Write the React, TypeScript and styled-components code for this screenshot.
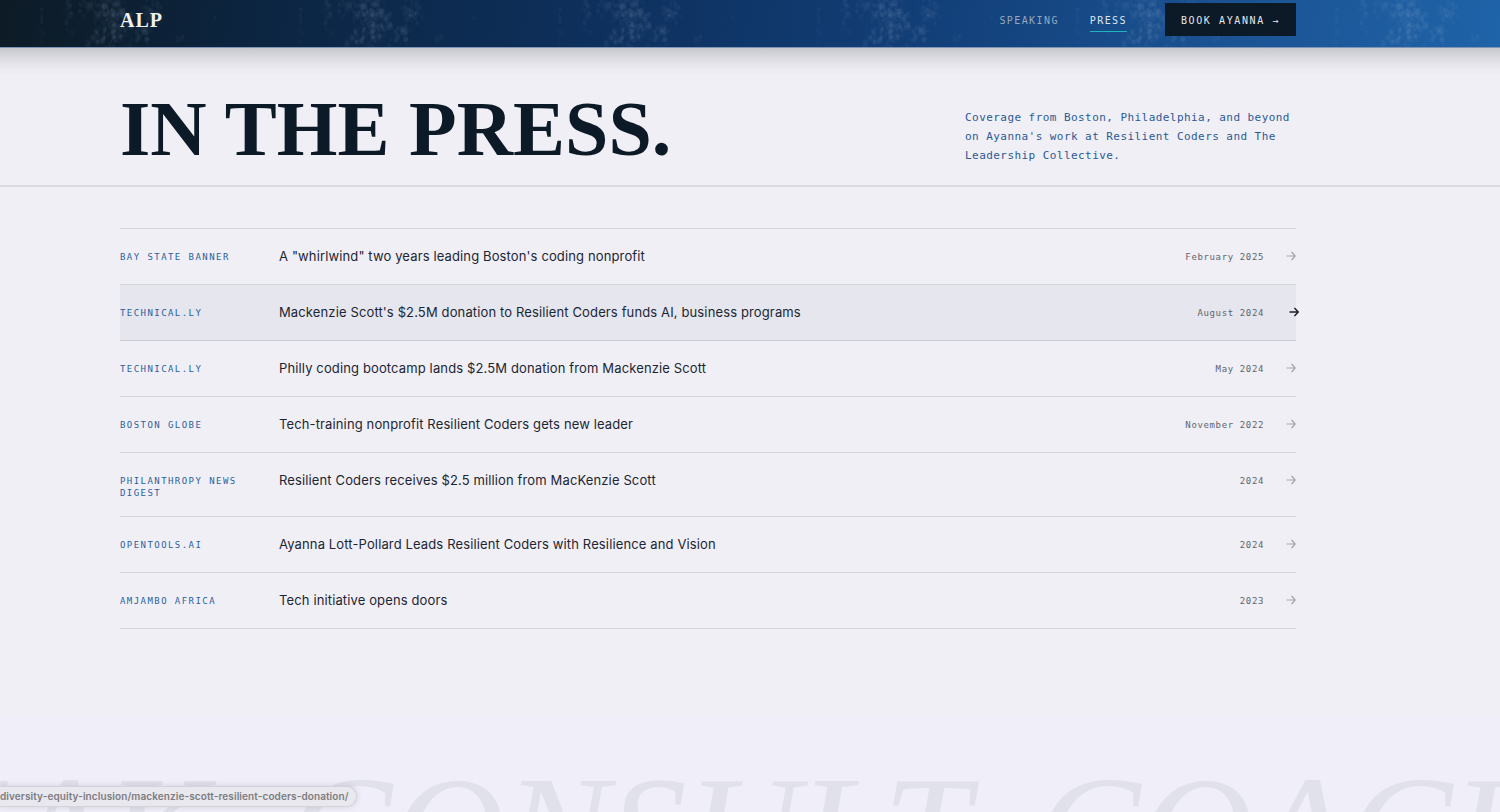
import React from "react";
import styled, { createGlobalStyle, css } from "styled-components";

const mono = `"DejaVu Sans Mono", monospace`;
const serif = `"Liberation Serif", serif`;
const sans = `Inter, sans-serif`;

const GlobalStyle = createGlobalStyle`
  *, *::before, *::after { box-sizing: border-box; }
  html, body { margin: 0; height: 100%; }
  #root { height: 100%; }
  body { background: #f0eff5; color: #1c2633; font-family: ${sans}; overflow: hidden; }
  a { color: inherit; text-decoration: none; }
`;

const Page = styled.div`
  display: flex;
  flex-direction: column;
  height: 100%;
  overflow: hidden;
  position: relative;
`;

const Header = styled.header`
  position: relative;
  z-index: 1;
  flex: none;
  border-bottom: 1px solid #7f95b8;
  background: linear-gradient(100deg, #0d1b26 0%, #0c2644 20%, #0e315f 42%, #123f78 62%, #1a5191 80%, #1f63a8 100%);

  &::after {
    content: "";
    position: absolute;
    top: 100%;
    left: 0;
    right: 0;
    height: 28px;
    margin-top: 1px;
    background: linear-gradient(rgba(20, 24, 40, 0.18), rgba(20, 24, 40, 0.11) 30%, rgba(20, 24, 40, 0.03) 65%, rgba(20, 24, 40, 0));
    pointer-events: none;
  }
`;

const Grain = styled.svg`
  position: absolute;
  inset: 0;
  width: 100%;
  height: 100%;
`;

const Container = styled.div`
  margin: 0 204px 0 120px;
`;

const HeaderInner = styled(Container)`
  position: relative;
  display: flex;
  align-items: center;
  justify-content: space-between;
  height: 47px;
  padding-bottom: 8px;
`;

const Logo = styled.a`
  font: bold 20px/24px ${serif};
  letter-spacing: 1px;
  color: #f1f0ec;
`;

const Nav = styled.nav`
  display: flex;
  align-items: center;
  gap: 31px;
  font: 10px/16px ${mono};
`;

const NavLink = styled.a<{ $active?: boolean }>`
  letter-spacing: 0.14em;
  margin-top: 5px;
  padding-bottom: 2px;
  border-bottom: 1px solid ${(p) => (p.$active ? "#1fb5bd" : "transparent")};
  color: ${(p) => (p.$active ? "#dfe5ec" : "#93a9c0")};
`;

const BookButton = styled.button`
  height: 33px;
  margin-left: 7px;
  padding: 2px 16px 0;
  border: 0;
  background: #0b1a26;
  color: #e6e7ec;
  font: 10px/16px ${mono};
  letter-spacing: 0.16em;
  white-space: nowrap;
`;

const Hero = styled.section`
  flex: none;
  border-bottom: 2px solid #dadae1;
`;

const HeroInner = styled(Container)`
  display: flex;
  align-items: flex-end;
  justify-content: space-between;
  padding: 45px 0 20px;
`;

const Title = styled.h1`
  margin: 0;
  font: bold 78px/72px ${serif};
  color: #0b1a26;
`;

const Intro = styled.p`
  width: 331px;
  margin: 0;
  font: 11px/19px ${mono};
  letter-spacing: 0.04em;
  color: #2b5a95;
`;

const List = styled.ul`
  flex: none;
  list-style: none;
  margin: 41px 204px 86px 120px;
  padding: 0;
  border-top: 1px solid #d5d5dc;
`;

const Row = styled.a<{ $hover?: boolean }>`
  display: grid;
  grid-template-columns: 127px 1fr auto 10px;
  column-gap: 32px;
  align-items: start;
  padding: 16px 0 17px;
  border-bottom: 1px solid #d5d5dc;
  ${(p) => p.$hover && css`background: #e5e6ee; border-color: #cbccd4;`}
`;

const Source = styled.span`
  padding-top: 6px;
  font: 9px/12px ${mono};
  letter-spacing: 0.16em;
  color: #2b5f9d;
`;

const Headline = styled.span`
  font-size: 13px;
  line-height: 22px;
  letter-spacing: 0.01em;
`;

const PressDate = styled.time`
  margin-right: -10px;
  padding-top: 6px;
  font: 9px/12px ${mono};
  letter-spacing: 0.07em;
  color: #60646c;
`;

const Arrow = styled.svg<{ $hover?: boolean }>`
  width: 10px;
  height: 22px;
  fill: none;
  stroke: ${(p) => (p.$hover ? "#1c2630" : "#a2a5ac")};
  stroke-width: ${(p) => (p.$hover ? 1.5 : 1.2)};
  transform: ${(p) => (p.$hover ? "translateX(3px)" : "none")};
`;

const Ticker = styled.section`
  flex: 1 0 0;
  min-height: 0;
  padding-top: 52px;
  overflow: hidden;
  background: #f0eef9;
`;

const TickerText = styled.div`
  margin-left: -258px;
  font: italic 156px/130px ${serif};
  color: #e0e1ea;
  white-space: nowrap;
`;

const Status = styled.div`
  position: absolute;
  left: 0;
  bottom: 5px;
  padding: 0 7px 0 0;
  border: 1px solid #d4d3da;
  border-left: 0;
  border-radius: 0 10px 10px 0;
  background: #e9e8ee;
  box-shadow: 0 0 6px rgba(20, 20, 40, 0.12);
  color: #7c7c81;
  font: 600 10px/19px Inter, sans-serif;
  letter-spacing: 0.01em;
  white-space: nowrap;
`;

type Article = { source: string; title: string; date: string; hover?: boolean };

const articles: Article[] = [
  { source: "BAY STATE BANNER", title: "A \"whirlwind\" two years leading Boston's coding nonprofit", date: "February 2025" },
  { source: "TECHNICAL.LY", title: "Mackenzie Scott's $2.5M donation to Resilient Coders funds AI, business programs", date: "August 2024", hover: true },
  { source: "TECHNICAL.LY", title: "Philly coding bootcamp lands $2.5M donation from Mackenzie Scott", date: "May 2024" },
  { source: "BOSTON GLOBE", title: "Tech-training nonprofit Resilient Coders gets new leader", date: "November 2022" },
  { source: "PHILANTHROPY NEWS DIGEST", title: "Resilient Coders receives $2.5 million from MacKenzie Scott", date: "2024" },
  { source: "OPENTOOLS.AI", title: "Ayanna Lott-Pollard Leads Resilient Coders with Resilience and Vision", date: "2024" },
  { source: "AMJAMBO AFRICA", title: "Tech initiative opens doors", date: "2023" },
];

// Speckle clusters: centre, spread and number of specks, tiled every 259px.
const clusters = [
  [68, 8, 4, 22, 24],
  [104, 6, 22, 10, 110],
  [114, 24, 16, 14, 150],
  [102, 42, 22, 8, 50],
  [154, 12, 9, 9, 44],
  [142, 32, 8, 10, 30],
  [42, 30, 4, 16, 8],
  [216, 12, 22, 20, 6],
  [185, 38, 8, 3, 4],
];

const specks = (() => {
  let seed = 7;
  const rnd = () => (seed = (seed * 16807) % 2147483647) / 2147483647;
  const spread = () => rnd() + rnd() - 1;
  return clusters.flatMap(([cx, cy, sx, sy, n]) =>
    Array.from({ length: n }, () => ({
      x: cx + spread() * sx * 1.4,
      y: cy + spread() * sy * 1.4,
      r: 0.6 + rnd() * 1.8,
      o: 0.015 + rnd() * 0.033,
    }))
  );
})();

export default function App() {
  return (
    <Page>
      <GlobalStyle />
      <Header>
        <Grain aria-hidden="true">
          <defs>
            <pattern id="specks" width="259" height="64" patternUnits="userSpaceOnUse">
              {specks.map((s, i) => (
                <ellipse key={i} cx={s.x} cy={s.y} rx={s.r} ry={s.r * 1.3} fill="#b9cbe0" opacity={s.o} />
              ))}
            </pattern>
          </defs>
          <rect width="100%" height="100%" fill="url(#specks)" />
        </Grain>
        <HeaderInner>
          <Logo href="#top">ALP</Logo>
          <Nav>
            <NavLink href="#speaking">SPEAKING</NavLink>
            <NavLink href="#press" $active>PRESS</NavLink>
            <BookButton type="button">BOOK AYANNA →</BookButton>
          </Nav>
        </HeaderInner>
      </Header>
      <Hero>
        <HeroInner>
          <Title>IN THE PRESS.</Title>
          <Intro>
            Coverage from Boston, Philadelphia, and beyond on Ayanna's work at Resilient Coders and The Leadership Collective.
          </Intro>
        </HeroInner>
      </Hero>
      <List>
        {articles.map((a) => (
          <li key={a.title}>
            <Row href="#article" $hover={a.hover}>
              <Source>{a.source}</Source>
              <Headline>{a.title}</Headline>
              <PressDate>{a.date}</PressDate>
              <Arrow $hover={a.hover} viewBox="0 0 10 22" aria-hidden="true">
                <path d="M0.5 11H9M5.5 7L9.2 11L5.5 15" />
              </Arrow>
            </Row>
          </li>
        ))}
      </List>
      <Ticker>
        <TickerText>SPEAK. CONSULT. COACH.</TickerText>
      </Ticker>
      <Status>diversity-equity-inclusion/mackenzie-scott-resilient-coders-donation/</Status>
    </Page>
  );
}
